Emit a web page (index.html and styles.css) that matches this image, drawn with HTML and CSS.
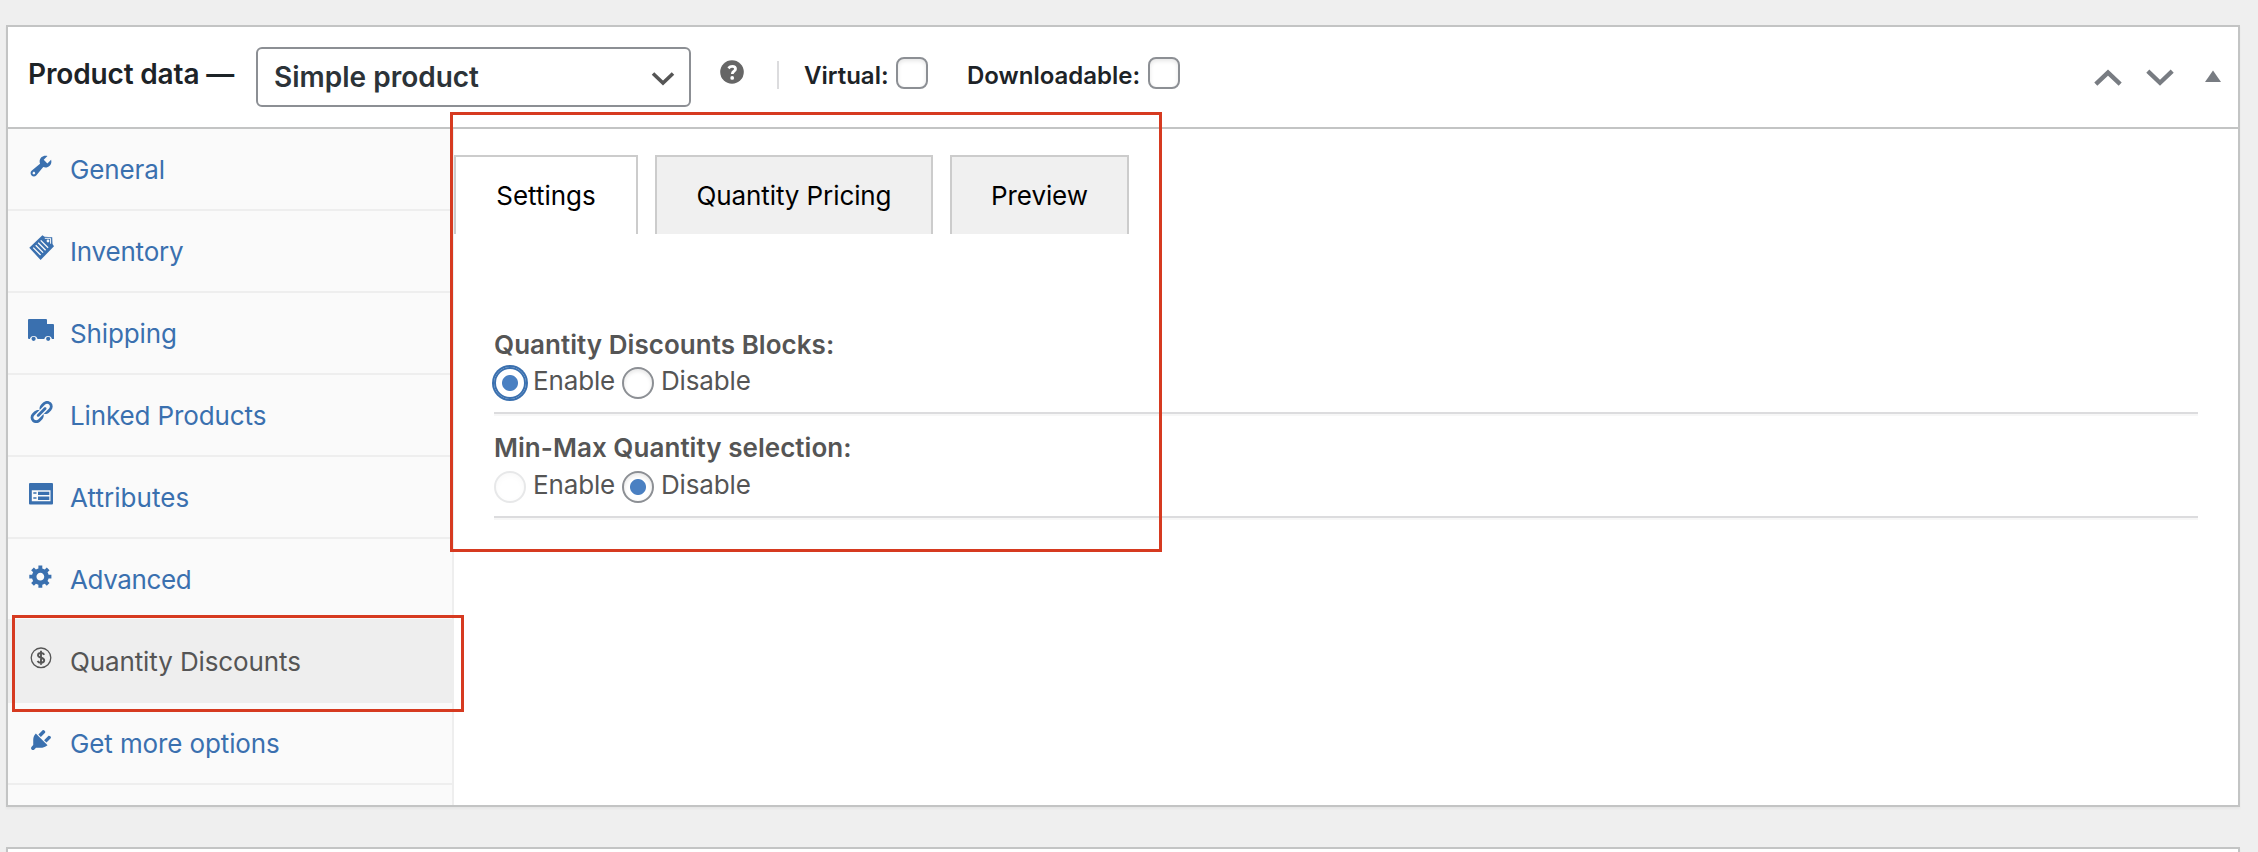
FILE: index.html
```html
<!DOCTYPE html>
<html lang="en">
<head>
<meta charset="utf-8">
<title>Product data</title>
<link rel="stylesheet" href="styles.css">
</head>
<body>
<main class="page">
  <section class="panel">
    <header class="panel-header">
      <h2 class="title"><span class="t">Product data —</span></h2>
      <div class="select"><span class="t">Simple product</span>
        <svg class="chevron" width="24" height="16" viewBox="0 0 24 16"><path d="M2 2.500 12 12 22 2.500" fill="none" stroke="#555" stroke-width="3.600"/></svg>
      </div>
      <svg class="help" width="24" height="24" viewBox="0 0 24 24"><circle cx="12" cy="12" r="11.800" fill="#666"/><path d="M8.400 8.200C9.600 6.900 11 6.400 12.300 6.400c2 0 3.200 1 3.200 2.600 0 2.200-3.200 2.300-3.200 5" fill="none" stroke="#fff" stroke-width="2.800"/><circle cx="12.200" cy="17.900" r="1.900" fill="#fff"/></svg>
      <div class="types">
        <label class="virtual"><span class="t">Virtual:</span><i class="checkbox"></i></label>
        <label class="download"><span class="t">Downloadable:</span><i class="checkbox"></i></label>
      </div>
      <div class="handles">
        <svg width="28" height="18" viewBox="0 0 28 18"><path d="M1.800 15.200 14 3.600 26.200 15.200" fill="none" stroke="#787c82" stroke-width="4.400"/></svg>
        <svg width="28" height="18" viewBox="0 0 28 18"><path d="M1.800 2.200 14 13.800 26.200 2.200" fill="none" stroke="#787c82" stroke-width="4.400"/></svg>
        <svg class="toggle" width="16" height="18" viewBox="0 0 16 18"><path d="M8 1.500 16 13H0z" fill="#787c82"/></svg>
      </div>
    </header>
    <div class="body">
      <nav class="tabs">
        <a class="tab"><svg width="26" height="26" viewBox="0 0 20 20"><path d="M16.68 9.77c-1.34 1.34-3.3 1.67-4.95.99l-5.41 6.52c-.99.99-2.59.99-3.58 0s-.99-2.59 0-3.57l6.52-5.42c-.68-1.65-.35-3.61.99-4.95 1.28-1.28 3.12-1.62 4.72-1.06l-2.89 2.89 2.82 2.82 2.86-2.87c.53 1.58.18 3.39-1.08 4.65zM3.81 16.21c.4.39 1.04.39 1.43 0 .4-.4.4-1.04 0-1.43-.39-.4-1.03-.4-1.43 0-.39.39-.39 1.03 0 1.43z"/></svg><span class="t">General</span></a>
        <a class="tab inventory"><svg width="26" height="26" viewBox="0 0 26 26"><path d="M1.300 12.800 14.400.300l2.200 1.400 7.600.600.300 6.600 1.500 2.400L12.600 25z"/><path d="m5.200 12.600 7.400 7.400M7.700 10.200l7.400 7.400M10.200 7.800l7.400 7.400M12.700 5.400l7.400 7.400" stroke="#fafafa" stroke-width="1.300" fill="none"/><path d="M16.800 3.300h5.800v5.400" stroke="#fafafa" stroke-width="1" fill="none"/><circle cx="20" cy="6" r="1.400" fill="#fafafa"/></svg><span class="t">Inventory</span></a>
        <a class="tab"><svg width="26" height="26" viewBox="0 0 26 26"><path d="M1 2h17a1 1 0 0 1 1 1v4h6a1 1 0 0 1 1 1v14h-2.100a3.900 3.900 0 0 0-7.600 0H9.500a3.900 3.900 0 0 0-7.600 0H1a1 1 0 0 1-1-1V3a1 1 0 0 1 1-1z"/><circle cx="5.600" cy="21.800" r="2.100"/><circle cx="20.200" cy="21.800" r="2.100"/></svg><span class="t">Shipping</span></a>
        <a class="tab"><svg width="26" height="26" viewBox="0 0 20 20"><path d="M17.74 2.76c1.68 1.69 1.68 4.41 0 6.1l-1.53 1.52c-1.12 1.12-2.7 1.47-4.14 1.09l2.62-2.61.76-.77.76-.76c.84-.84.84-2.2 0-3.04-.84-.85-2.2-.85-3.04 0l-.77.76-3.38 3.38c-.37-1.44-.02-3.02 1.1-4.14l1.52-1.53c1.69-1.68 4.42-1.68 6.1 0zM8.59 13.43l5.34-5.34c.42-.42.42-1.1 0-1.52-.44-.43-1.13-.39-1.53 0l-5.33 5.34c-.42.42-.42 1.1 0 1.52.44.43 1.13.39 1.52 0zm-.76 2.29l4.14-4.15c.38 1.44.03 3.02-1.09 4.14l-1.52 1.53c-1.69 1.68-4.41 1.68-6.1 0-1.68-1.68-1.68-4.42 0-6.1l1.53-1.52c1.12-1.12 2.7-1.47 4.14-1.1l-4.14 4.15c-.85.84-.85 2.2 0 3.05.84.84 2.2.84 3.04 0z"/></svg><span class="t">Linked Products</span></a>
        <a class="tab attributes"><svg width="26" height="26" viewBox="0 0 26 26"><path fill-rule="evenodd" d="M2 2h22a1 1 0 0 1 1 1v19.500a1 1 0 0 1-1 1H2a1 1 0 0 1-1-1V3a1 1 0 0 1 1-1zm1.800 7.200v11h18.700v-11z"/><path d="M10 10.800h11.300v3.300H10zM10 15.600h11.300v3.300H10zM5.300 11.200h3.200v1.500H5.300zM5.300 16.300h3.200v1.500H5.300z"/></svg><span class="t">Attributes</span></a>
        <a class="tab advanced"><svg width="26" height="26" viewBox="0 0 20 20"><path d="M18 12h-2.180c-.17.7-.44 1.350-.81 1.930l1.540 1.540-2.100 2.100-1.540-1.540c-.58.36-1.230.63-1.910.79V19H8v-2.180c-.68-.16-1.330-.43-1.910-.79l-1.540 1.540-2.120-2.120 1.540-1.540c-.36-.58-.63-1.230-.79-1.910H1V9.030h2.170c.16-.7.44-1.350.8-1.940L2.430 5.550l2.100-2.100 1.540 1.540c.58-.37 1.240-.64 1.930-.81V2h3v2.180c.68.16 1.330.43 1.910.79l1.540-1.540 2.120 2.120-1.540 1.540c.36.59.64 1.240.8 1.940H18V12zm-8.500 1.500c1.660 0 3-1.340 3-3s-1.340-3-3-3-3 1.340-3 3 1.340 3 3 3z"/></svg><span class="t">Advanced</span></a>
        <a class="tab active"><svg width="26" height="26" viewBox="0 0 26 26"><circle cx="13" cy="12.800" r="9.800" fill="none" stroke="#555" stroke-width="1.300"/><path d="M16.300 9.700C15.500 8.500 14.300 8 13 8c-1.800 0-3 .9-3 2.300 0 3.200 6.200 1.700 6.200 5 0 1.500-1.400 2.400-3.200 2.400-1.500 0-2.800-.6-3.500-1.800M13 5.800v14" fill="none" stroke="#555" stroke-width="1.900"/></svg><span class="t">Quantity Discounts</span></a>
        <a class="tab"><svg width="26" height="26" viewBox="0 0 20 20"><path d="M13.110 4.360L9.870 7.600 8 5.730l3.240-3.240c.35-.34 1.050-.2 1.560.32.52.51.66 1.210.31 1.550zm-8 1.770l.91-1.120 9.010 9.010-1.190.84c-.71.71-2.630 1.160-3.820 1.160H6.140L4.900 17.260c-.59.59-1.540.59-2.120 0-.59-.58-.59-1.530 0-2.120l1.240-1.240v-3.880c0-1.130.4-3.190 1.090-3.890zm7.260 3.970l3.240-3.240c.34-.35 1.040-.21 1.550.31.52.51.66 1.210.31 1.550l-3.240 3.250z"/></svg><span class="t">Get more options</span></a>
      </nav>
      <div class="content">
        <div class="subtabs">
          <div class="subtab current"><span class="t">Settings</span></div>
          <div class="subtab pricing"><span class="t">Quantity Pricing</span></div>
          <div class="subtab preview"><span class="t">Preview</span></div>
        </div>
        <div class="options">
          <div class="field">
            <h3><span class="t">Quantity Discounts Blocks:</span></h3>
            <div class="radios"><i class="radio checked focus"></i><span class="t enable">Enable</span><i class="radio"></i><span class="t">Disable</span></div>
          </div>
          <div class="field second">
            <h3><span class="t">Min-Max Quantity selection:</span></h3>
            <div class="radios"><i class="radio disabled"></i><span class="t enable">Enable</span><i class="radio checked"></i><span class="t">Disable</span></div>
          </div>
        </div>
      </div>
    </div>
  </section>
  <section class="panel next"></section>
  <div class="mark mark-settings"></div>
  <div class="mark mark-tab"></div>
</main>
</body>
</html>
```
FILE: styles.css
```css
* { box-sizing: border-box; }
body {
  margin: 0;
  background: #efefef;
  color: #555;
  font: 26px/32px Inter, "Liberation Sans", sans-serif;
}
h2, h3 { margin: 0; font-size: inherit; font-weight: 600; }
svg { display: block; flex: none; }
.page { position: relative; height: 852px; padding: 25px 18px 0 6px; overflow: hidden; }
.panel {
  height: 782px;
  border: 2px solid #c3c4c4;
  background: #fff;
  box-shadow: 0 2px 2px rgba(0, 0, 0, .04);
}
.next { margin-top: 40px; }

.panel-header {
  display: flex;
  height: 102px;
  padding: 20px 17px 0 20px;
  border-bottom: 2px solid #c3c4c4;
  color: #1d2327;
}
.title { width: 228px; padding-top: 11px; font-size: 28px; letter-spacing: -.15px; white-space: nowrap; }
.select {
  display: flex;
  justify-content: space-between;
  width: 435px;
  height: 60px;
  padding: 12px 14px 0 16px;
  border: 2px solid #8c8f94;
  border-radius: 6px;
  color: #2c3338;
  font-size: 28px;
  font-weight: 600;
}
.chevron { margin-top: 10px; }
.help { margin: 13px 0 0 29px; }
.types {
  display: flex;
  height: 28px;
  margin: 14px 0 0 33px;
  padding-left: 25px;
  border-left: 2px solid #dcdcde;
  font-size: 24px;
  font-weight: 600;
}
.types label { display: flex; margin-top: -4px; height: 32px; justify-content: space-between; white-space: nowrap; }
.types .t { padding-top: 3px; }
.virtual { width: 124px; }
.download { width: 213px; margin-left: 39px; }
.checkbox {
  width: 32px;
  height: 32px;
  border: 2px solid #8c8f94;
  border-radius: 8px;
  box-shadow: inset 0 2px 4px rgba(0, 0, 0, .1);
}
.handles { display: flex; gap: 24px; margin: 22px 0 0 auto; }
.toggle { margin-left: 7px; }

.body { display: flex; height: 676px; }
.tabs { width: 446px; border-right: 2px solid #eee; background: #fafafa; letter-spacing: -.12px; }
.tab {
  display: flex;
  gap: 16px;
  height: 82px;
  padding: 24px 0 0 20px;
  border-bottom: 2px solid #eee;
  color: #3a70af;
  white-space: nowrap;
}
.tab svg { fill: #3a70af; }
.tab .t { margin-top: 1px; }
.inventory { letter-spacing: -.2px; }
.attributes { letter-spacing: .05px; }
.advanced { letter-spacing: -.4px; }
.active { width: 446px; background: #eee; color: #555; }

.content { flex: 1; padding-top: 26px; }
.subtabs { display: flex; gap: 17px; color: #000; letter-spacing: -.1px; }
.subtab {
  height: 79px;
  padding-top: 23px;
  border: 2px solid #ccc;
  border-bottom: 0;
  background: #f0f0f0;
  text-align: center;
  white-space: nowrap;
}
.current { width: 184px; background: #fff; letter-spacing: 0; }
.pricing { width: 278px; }
.preview { width: 179px; }
.options { margin: 95px 40px 0; }
.field { height: 85px; border-bottom: 2px solid #dcdcde; box-shadow: 0 2px 0 #f7f7f7; }
.field h3 { letter-spacing: .04px; }
.second { height: 87px; margin-top: 17px; padding-top: 1px; }
.radios { display: flex; margin-top: 6px; }
.second .radios { margin-top: 7px; }
.radio {
  flex: none;
  width: 32px;
  height: 32px;
  margin-right: 7px;
  border: 2px solid #8c8f94;
  border-radius: 50%;
  box-shadow: inset 0 2px 4px rgba(0, 0, 0, .1);
}
.radios .t { margin-top: -2px; letter-spacing: -.15px; }
.enable { flex: none; width: 89px; }
.checked { background: radial-gradient(circle, #4a80c2 7.500px, transparent 8.500px); }
.focus { border-color: #3a70af; box-shadow: 0 0 0 2px #3a70af; }
.disabled { opacity: .2; }

.mark { position: absolute; border: 3px solid #d63a20; }
.mark-settings { left: 450px; top: 112px; width: 712px; height: 440px; }
.mark-tab { left: 12px; top: 615px; width: 452px; height: 97px; }
```
